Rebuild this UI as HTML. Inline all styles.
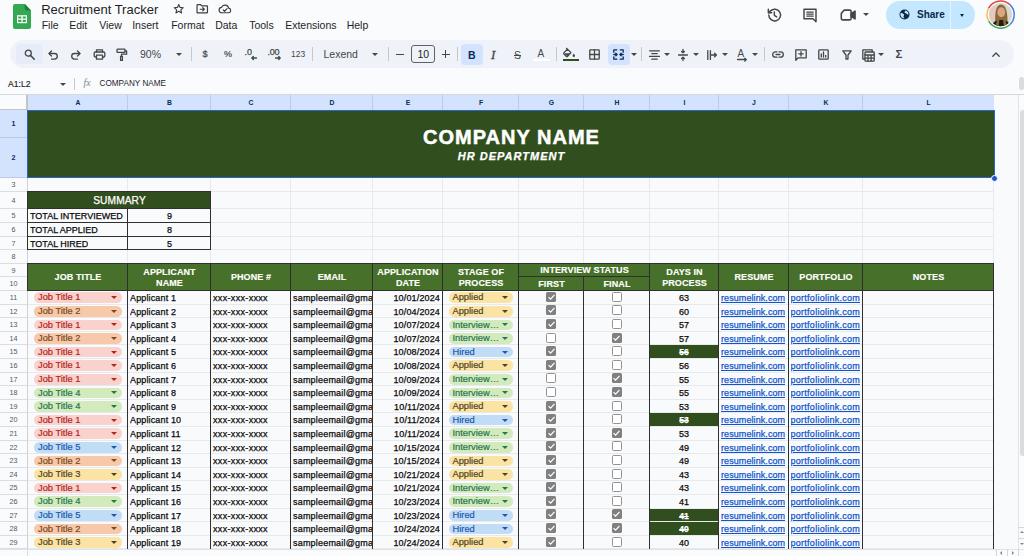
<!DOCTYPE html>
<html lang="en"><head><meta charset="utf-8"><title>Recruitment Tracker</title>
<style>
*{box-sizing:border-box;margin:0;padding:0}
html,body{width:1024px;height:556px;overflow:hidden;background:#f9fbfd;font-family:"Liberation Sans",sans-serif;color:#1f1f1f}
.abs,.abs>*{position:absolute}
#app{position:relative;width:1024px;height:556px;overflow:hidden}
.t{position:absolute;white-space:nowrap;line-height:1}
.menu{font-size:10.5px;top:20px;color:#1f1f1f}
.sep{position:absolute;width:1px;background:#c7c7c7;top:47px;height:14px}
.ico{position:absolute;overflow:visible}
.ch{position:absolute;top:95px;height:15px;background:#d3e3fd;color:#0b2a5b;font-size:6.8px;font-weight:700;text-align:center;line-height:15px}
.rh{position:absolute;left:0;width:27px;color:#55585d;font-size:7.200px;text-align:center;background:#f9fbfd}
.rh.sel{background:#d3e3fd;color:#0b2a5b;font-weight:700}
.hl{position:absolute;height:1px;background:#e8e9eb}
.vl{position:absolute;width:1px;background:#e8e9eb}
.bl{position:absolute;background:#303030}
.c{position:absolute;white-space:nowrap;overflow:hidden;font-size:9px;color:#0a0a0a;line-height:1;-webkit-text-stroke:.25px currentColor}
.hd{position:absolute;color:#fff;font-weight:700;font-size:9px;text-align:center;line-height:10.25px;letter-spacing:.1px;-webkit-text-stroke:.15px #fff}
.chip{position:absolute;height:10.600px;border-radius:5.300px;font-size:9.300px;line-height:10.400px;white-space:nowrap;overflow:hidden;-webkit-text-stroke:.2px currentColor}
.chip b{position:absolute;right:4.300px;top:3.800px;width:0;height:0;border-left:3px solid transparent;border-right:3px solid transparent;border-top:3.400px solid currentColor}
.chip span{position:absolute;left:4px;top:0}
.cb{position:absolute;width:10px;height:10px;border-radius:1.6px}
.cb.off{border:1.200px solid #929292;background:#fff}
.cb.on{background:#808080}
.lnk{color:#1155cc;text-decoration:underline;text-decoration-thickness:.8px;text-underline-offset:1px}
</style></head><body><div id="app">

<svg class="ico" style="left:13.300px;top:4px" width="18" height="25" viewBox="0 0 19 25" preserveAspectRatio="none"><path d="M2 0h10.5L19 6.5V23a2 2 0 0 1-2 2H2a2 2 0 0 1-2-2V2a2 2 0 0 1 2-2z" fill="#34a853"/><path d="M12.5 0L19 6.5h-4.5a2 2 0 0 1-2-2z" fill="#188038"/><path d="M4.2 11.2h10.6v8H4.2z" fill="#fff"/><path d="M5.5 12.5h3.3v2.1H5.5zM10.2 12.5h3.3v2.1h-3.3zM5.5 15.8h3.3v2.1H5.5zM10.2 15.8h3.3v2.1h-3.3z" fill="#34a853"/></svg>
<div class="t" style="left:41.200px;top:3px;font-size:13px;color:#1f1f1f">Recruitment Tracker</div>
<svg class="ico" style="left:173px;top:3px" width="11.500" height="11.500" viewBox="0 0 24 24" fill="none" stroke="#3c4043" stroke-width="2.300" stroke-linejoin="round"><path d="M12 3l2.7 6.2 6.8.6-5.1 4.5 1.5 6.6L12 17.4 6.100 20.9l1.500-6.600L2.500 9.800l6.800-.6z"/></svg>
<svg class="ico" style="left:195.500px;top:3.300px" width="12.500" height="11.500" viewBox="0 0 24 22" fill="none" stroke="#3c4043" stroke-width="2.300" stroke-linejoin="round"><path d="M2 4a1 1 0 0 1 1-1h6l2 2.500h10a1 1 0 0 1 1 1V18a1 1 0 0 1-1 1H3a1 1 0 0 1-1-1z"/><path d="M8 12h8M13 9l3 3-3 3" stroke-linecap="round"/></svg>
<svg class="ico" style="left:217.500px;top:3px" width="14" height="12" viewBox="0 0 26 22" fill="none" stroke="#3c4043" stroke-width="2.200" stroke-linejoin="round" stroke-linecap="round"><path d="M7 18a5 5 0 0 1-.6-9.960A7 7 0 0 1 19.800 9.500 4.300 4.300 0 0 1 20 18z"/><path d="M9.500 12.500l2.700 2.700 4.600-4.800"/></svg>
<div class="t menu" style="left:41.7px">File</div>
<div class="t menu" style="left:69.2px">Edit</div>
<div class="t menu" style="left:99.2px">View</div>
<div class="t menu" style="left:132.2px">Insert</div>
<div class="t menu" style="left:171.2px">Format</div>
<div class="t menu" style="left:215.2px">Data</div>
<div class="t menu" style="left:249.2px">Tools</div>
<div class="t menu" style="left:285.2px">Extensions</div>
<div class="t menu" style="left:346.7px">Help</div>
<svg class="ico" style="left:766px;top:7px" width="16" height="16" viewBox="0 0 24 24" fill="none" stroke="#444746" stroke-width="2.200" stroke-linecap="round" stroke-linejoin="round"><path d="M4.200 12a8.800 8.800 0 1 0 2.600-6.200L4 8.500"/><path d="M3.500 3.500v5h5"/><path d="M12.500 7.500v5l3.500 2.200"/></svg>
<svg class="ico" style="left:802px;top:7px" width="16" height="16" viewBox="0 0 24 24" fill="none" stroke="#444746" stroke-width="2.200" stroke-linejoin="round"><path d="M3 3.500h18v18.500l-4.500-4.500H3z"/><path d="M6.500 7.700h11M6.500 10.700h11M6.500 13.700h11" stroke-width="1.900"/></svg>
<svg class="ico" style="left:840px;top:8px" width="17" height="14" viewBox="0 0 26 20" fill="none" stroke="#444746" stroke-width="2.400" stroke-linejoin="round"><path d="M2 7.500L6.500 2.500H15a2 2 0 0 1 2 2v11a2 2 0 0 1-2 2H4a2 2 0 0 1-2-2z"/><path d="M17 8l6-4v12l-6-4z" fill="#444746"/></svg>
<div class="ico" style="left:863.400px;top:12.700px;border-left:3px solid transparent;border-right:3px solid transparent;border-top:3.300px solid #444746"></div>
<div style="position:absolute;left:885.5px;top:0.5px;width:89.500px;height:28.500px;border-radius:14.500px;background:#c2e7ff"></div>
<div style="position:absolute;left:950px;top:0.5px;width:1px;height:28.500px;background:#e6f4ff"></div>
<svg class="ico" style="left:899px;top:9px" width="11" height="11" viewBox="0 0 24 24"><circle cx="12" cy="12" r="11" fill="#0b2a4a"/><path d="M4 8c3 0 4 2 6 3s1 3 0 4 1 4 2 5c-4 1-9-3-9-8 0-2 .5-3 1-4zM14 3c0 2-2 2-2 4s3 1 4 3 3 1 4 3c2-4-1-9-6-10z" fill="#c2e7ff"/></svg>
<div class="t" style="left:917px;top:9.800px;font-size:10px;font-weight:700;color:#0b2a4a">Share</div>
<div class="ico" style="left:960px;top:13.500px;border-left:2.800px solid transparent;border-right:2.800px solid transparent;border-top:3.200px solid #0b2a4a"></div>
<svg class="ico" style="left:986px;top:0px" width="30" height="30" viewBox="0 0 30 30"><defs><clipPath id="av"><circle cx="14.6" cy="14.6" r="11.600"/></clipPath></defs>
<g fill="none" stroke-width="1.500"><path d="M2.48 8.43A13.6 13.6 0 0 1 23.88 4.65" stroke="#e0443a"/><path d="M23.88 4.65A13.6 13.6 0 0 1 23.70 24.71" stroke="#4a7fe0"/><path d="M23.70 24.71A13.6 13.6 0 0 1 2.71 21.19" stroke="#3fa757"/><path d="M2.71 21.19A13.6 13.6 0 0 1 2.48 8.43" stroke="#f5c04a"/></g>
<g clip-path="url(#av)"><rect width="30" height="30" fill="#d9d8d0"/><rect x="3" y="6" width="8" height="16" fill="#e3c9c0"/><path d="M9.500 26C8.500 14 9.500 4.500 15 4.500S21.800 13 21.500 26z" fill="#8b6a36"/><ellipse cx="15.300" cy="12.300" rx="3.900" ry="5" fill="#d9a585"/><path d="M5 30c0-7 3.500-10 10-10s10 3 10 10z" fill="#1c1c1a"/><path d="M10 27c0-4 1-8 2-9l1.500 1-1 9zM20.500 27c0-4-1-8-2-9l-1.500 1 1 9z" fill="#8b6a36"/></g></svg>
<div style="position:absolute;left:10px;top:40px;width:1004px;height:28px;border-radius:14px;background:#eff3f9"></div>
<div style="position:absolute;left:16px;top:44px;width:26.500px;height:20px;border-radius:4px;background:#e6ecf8"></div>
<div style="position:absolute;left:461px;top:44px;width:21.500px;height:20.500px;border-radius:4px;background:#d3e3fd"></div>
<div style="position:absolute;left:608px;top:44px;width:21.500px;height:20.500px;border-radius:4px;background:#d3e3fd"></div>
<div class="sep" style="left:190.5px"></div>
<div class="sep" style="left:312.0px"></div>
<div class="sep" style="left:388.0px"></div>
<div class="sep" style="left:457.0px"></div>
<div class="sep" style="left:555.5px"></div>
<div class="sep" style="left:641.0px"></div>
<div class="sep" style="left:763.5px"></div>
<svg class="ico" style="left:22.500px;top:48px" width="13" height="13" viewBox="0 0 13 13" fill="none" stroke="#444746" stroke-width="1.300" stroke-linecap="round" stroke-linejoin="round"><circle cx="5.300" cy="5.200" r="3"/><path d="M7.600 7.500l3.600 3.600" stroke-width="1.500"/></svg>
<svg class="ico" style="left:47px;top:49px" width="12" height="12" viewBox="0 0 12 12" fill="none" stroke="#444746" stroke-width="1.300" stroke-linecap="round" stroke-linejoin="round"><path d="M4.500 2L2 4.500 4.500 7"/><path d="M2.300 4.500H7.500a2.800 2.800 0 0 1 0 5.600H4.500"/></svg>
<svg class="ico" style="left:70px;top:49px" width="12" height="12" viewBox="0 0 12 12" fill="none" stroke="#444746" stroke-width="1.300" stroke-linecap="round" stroke-linejoin="round"><path d="M7.500 2L10 4.500 7.500 7"/><path d="M9.700 4.500H4.500a2.800 2.800 0 0 0 0 5.600H7.500"/></svg>
<svg class="ico" style="left:92.500px;top:48px" width="13" height="13" viewBox="0 0 13 13" fill="none" stroke="#444746" stroke-width="1.300" stroke-linecap="round" stroke-linejoin="round"><path d="M3.500 4V1.800h6V4"/><rect x="1.200" y="4" width="10.600" height="5" rx="1.200"/><rect x="3.500" y="7.200" width="6" height="4" fill="#eff3f9"/></svg>
<svg class="ico" style="left:115px;top:48px" width="13" height="14" viewBox="0 0 13 14" fill="none" stroke="#444746" stroke-width="1.300" stroke-linecap="round" stroke-linejoin="round"><rect x="2" y="1.200" width="8" height="3.200" rx=".6"/><path d="M10 2.800h1.600v3.400H6.500v2.200"/><rect x="5.600" y="8.400" width="1.800" height="4" /></svg>
<div class="t" style="left:140px;top:49px;font-size:10.500px;color:#444746">90%</div>
<div class="ico" style="left:175.5px;top:53px;border-left:3px solid transparent;border-right:3px solid transparent;border-top:3.300px solid #444746"></div>
<div class="t" style="left:202.500px;top:49.500px;font-size:9.200px;color:#444746;-webkit-text-stroke:.2px #444746">$</div>
<div class="t" style="left:224px;top:50px;font-size:9px;color:#444746;-webkit-text-stroke:.2px #444746">%</div>
<div class="t" style="left:244.500px;top:48px;font-size:9px;color:#444746;-webkit-text-stroke:.25px #444746">.0</div>
<svg class="ico" style="left:251px;top:56.300px" width="6" height="4" viewBox="0 0 6 4" fill="none" stroke="#444746" stroke-width="1.300" stroke-linecap="round" stroke-linejoin="round" stroke-width="1"><path d="M5.500 2H1M2.300 .5L.8 2l1.500 1.500"/></svg>
<div class="t" style="left:267.500px;top:48px;font-size:9px;color:#444746;-webkit-text-stroke:.25px #444746;letter-spacing:-.3px">.00</div>
<svg class="ico" style="left:275px;top:56.300px" width="6" height="4" viewBox="0 0 6 4" fill="none" stroke="#444746" stroke-width="1.300" stroke-linecap="round" stroke-linejoin="round" stroke-width="1"><path d="M.5 2H5M3.700 .5L5.200 2 3.700 3.500"/></svg>
<div class="t" style="left:291px;top:50px;font-size:8.500px;color:#444746">123</div>
<div class="t" style="left:323.500px;top:48.500px;font-size:10.500px;color:#444746">Lexend</div>
<div class="ico" style="left:371.5px;top:53px;border-left:3px solid transparent;border-right:3px solid transparent;border-top:3.300px solid #444746"></div>
<div style="position:absolute;left:396px;top:53.500px;width:7.500px;height:1.200px;background:#444746"></div>
<div style="position:absolute;left:411px;top:45px;width:24px;height:17.500px;border:1px solid #5f6368;border-radius:3px"></div>
<div class="t" style="left:417.500px;top:48.800px;font-size:10.500px;color:#1f1f1f">10</div>
<div style="position:absolute;left:441.500px;top:53.500px;width:8px;height:1.200px;background:#444746"></div><div style="position:absolute;left:444.900px;top:50.100px;width:1.200px;height:8px;background:#444746"></div>
<div class="t" style="left:468px;top:49.500px;font-size:10.500px;font-weight:700;color:#0b2a5b">B</div>
<div class="t" style="left:491px;top:47.500px;font-size:13px;font-style:italic;font-family:'Liberation Serif',serif;font-weight:400;color:#444746;-webkit-text-stroke:.3px #444746">I</div>
<div class="t" style="left:514px;top:49.500px;font-size:10.500px;color:#444746;text-decoration:line-through">S</div>
<div class="t" style="left:537.500px;top:48.500px;font-size:10px;color:#444746">A</div>
<div style="position:absolute;left:533px;top:58.500px;width:16.500px;height:2px;background:#fff"></div>
<svg class="ico" style="left:563px;top:47px" width="14" height="11" viewBox="0 0 14 11"><path d="M3.200 1l4.800 4.600-3.400 3.600a1 1 0 0 1-1.400 0L1 7a1 1 0 0 1 0-1.400L4.400 2.200" fill="none" stroke="#444746" stroke-width="1.300" stroke-linejoin="round"/><path d="M1.300 6.300h5.900L4.200 9.200z" fill="#444746"/><path d="M10.800 6.500c.7 1 1.200 1.700 1.200 2.300a1.200 1.200 0 0 1-2.400 0c0-.6.500-1.300 1.200-2.300z" fill="#444746"/></svg>
<div style="position:absolute;left:562.500px;top:58.500px;width:16.500px;height:2.200px;background:#314e1e"></div>
<svg class="ico" style="left:589px;top:49px" width="11" height="11" viewBox="0 0 11 11" fill="none" stroke="#444746" stroke-width="1.300" stroke-linecap="round" stroke-linejoin="round" stroke-width="1.200"><rect x=".8" y=".8" width="9.400" height="9.400" rx=".6"/><path d="M5.500 .8v9.400M.8 5.500h9.400"/></svg>
<svg class="ico" style="left:613px;top:49px" width="11" height="11" viewBox="0 0 11 11" fill="none" stroke="#0b2a5b" stroke-width="1.300" stroke-linecap="round" stroke-linejoin="round"><path d="M.8 3.200V.8h3M7.200 .8h3v2.400M.8 7.800v2.400h3M7.200 10.200h3V7.800"/><path d="M.8 5.500h3M2.800 4.200l1.300 1.300-1.300 1.300M10.200 5.500h-3M8.200 4.200L6.900 5.500l1.300 1.300"/></svg>
<div class="ico" style="left:631px;top:53px;border-left:3px solid transparent;border-right:3px solid transparent;border-top:3.300px solid #444746"></div>
<svg class="ico" style="left:648.500px;top:49.500px" width="11" height="10" viewBox="0 0 11 10" fill="none" stroke="#444746" stroke-width="1.300" stroke-linecap="round" stroke-linejoin="round" stroke-width="1.200"><path d="M.6 .8h9.800M2.800 3.600h5.400M.6 6.400h9.800M2.800 9.200h5.400"/></svg>
<div class="ico" style="left:664px;top:53px;border-left:3px solid transparent;border-right:3px solid transparent;border-top:3.300px solid #444746"></div>
<svg class="ico" style="left:678px;top:48.500px" width="10" height="12" viewBox="0 0 10 12" fill="none" stroke="#444746" stroke-width="1.300" stroke-linecap="round" stroke-linejoin="round" stroke-width="1.200"><path d="M.6 6h8.800M5 .5v3.300M3.600 2.500L5 3.900l1.400-1.400M5 11.500V8.200M3.600 9.500L5 8.100l1.400 1.400"/></svg>
<div class="ico" style="left:693px;top:53px;border-left:3px solid transparent;border-right:3px solid transparent;border-top:3.300px solid #444746"></div>
<svg class="ico" style="left:707px;top:49.500px" width="11" height="10" viewBox="0 0 11 10" fill="none" stroke="#444746" stroke-width="1.300" stroke-linecap="round" stroke-linejoin="round" stroke-width="1.200"><path d="M.8 .6v8.800M3.400 .6v8.800M3.400 5h5.800M7.600 3.200L9.400 5 7.600 6.800"/></svg>
<div class="ico" style="left:722px;top:53px;border-left:3px solid transparent;border-right:3px solid transparent;border-top:3.300px solid #444746"></div>
<div class="t" style="left:737.500px;top:48.500px;font-size:10px;color:#444746">A</div>
<svg class="ico" style="left:737px;top:57.500px" width="11" height="4" viewBox="0 0 11 4" fill="none" stroke="#444746" stroke-width="1.300" stroke-linecap="round" stroke-linejoin="round" stroke-width="1"><path d="M.5 1.500h8.500M7.800 .3l1.500 1.200-1.500 1.500"/></svg>
<div class="ico" style="left:751.5px;top:53px;border-left:3px solid transparent;border-right:3px solid transparent;border-top:3.300px solid #444746"></div>
<svg class="ico" style="left:771.500px;top:51px" width="12" height="7" viewBox="0 0 12 7" fill="none" stroke="#444746" stroke-width="1.300" stroke-linecap="round" stroke-linejoin="round" stroke-width="1.300"><path d="M5 .8H3.400a2.700 2.700 0 0 0 0 5.400H5M7 .8h1.600a2.700 2.700 0 0 1 0 5.400H7M4 3.500h4"/></svg>
<svg class="ico" style="left:794.500px;top:48.500px" width="12" height="12" viewBox="0 0 12 12" fill="none" stroke="#444746" stroke-width="1.300" stroke-linecap="round" stroke-linejoin="round" stroke-width="1.200"><path d="M.8 .8h10.400v8H3.200L.8 11.200z"/><path d="M6 2.600v4.400M3.800 4.800h4.400"/></svg>
<svg class="ico" style="left:818px;top:49px" width="11" height="11" viewBox="0 0 11 11" fill="none" stroke="#444746" stroke-width="1.300" stroke-linecap="round" stroke-linejoin="round" stroke-width="1.200"><rect x=".8" y=".8" width="9.400" height="9.400" rx=".8"/><path d="M3.300 8V5M5.500 8V3M7.700 8V6.500"/></svg>
<svg class="ico" style="left:841.500px;top:49.500px" width="10" height="10" viewBox="0 0 10 10" fill="none" stroke="#444746" stroke-width="1.300" stroke-linecap="round" stroke-linejoin="round" stroke-width="1.300"><path d="M.8 .8h8.400L6 5v4H4V5z"/></svg>
<svg class="ico" style="left:862px;top:48.500px" width="13" height="13" viewBox="0 0 13 13" fill="none" stroke="#444746" stroke-width="1.300" stroke-linecap="round" stroke-linejoin="round" stroke-width="1.200"><path d="M2.600 10H.8V.8h9.400v1.800"/><rect x="3" y="3" width="9.200" height="9.200" rx=".8"/><path d="M3 6h9.200M6 6v6.200M9.100 6v6.200M3 9.100h9.200"/></svg>
<div class="ico" style="left:878px;top:53px;border-left:3px solid transparent;border-right:3px solid transparent;border-top:3.300px solid #444746"></div>
<div class="t" style="left:895.500px;top:48.500px;font-size:11.500px;font-weight:700;color:#444746">&Sigma;</div>
<svg class="ico" style="left:991.500px;top:52px" width="8" height="5" viewBox="0 0 8 5" fill="none" stroke="#444746" stroke-width="1.300" stroke-linecap="round" stroke-linejoin="round" stroke-width="1.300"><path d="M.8 4.200L4 1l3.200 3.200"/></svg>
<div class="t" style="left:8px;top:79.500px;font-size:8.600px;color:#1f1f1f;-webkit-text-stroke:.15px #1f1f1f">A1:L2</div>
<div class="ico" style="left:59.5px;top:82.5px;border-left:3px solid transparent;border-right:3px solid transparent;border-top:3.300px solid #444746"></div>
<div style="position:absolute;left:74px;top:78px;width:1px;height:12px;background:#c7c7c7"></div>
<div class="t" style="left:83.500px;top:78px;font-size:10px;font-style:italic;font-family:'Liberation Serif',serif;color:#80868b">fx</div>
<div class="t" style="left:99.500px;top:79.500px;font-size:8.200px;color:#1f1f1f">COMPANY NAME</div>
<div style="position:absolute;left:1018.500px;top:77px;width:5px;height:13px;border-radius:2.500px;background:#dadce0"></div>
<div style="position:absolute;left:0;top:94px;width:1024px;height:1px;background:#d5d7da"></div>
<div style="position:absolute;left:0;top:95px;width:1018px;height:454px;background:#f9fafc"></div>
<div style="position:absolute;left:0;top:95px;width:27.500px;height:15.500px;background:#f9fbfd;border-right:2.500px solid #c2c3c5;border-bottom:2.500px solid #c2c3c5"></div>
<div class="ch" style="left:28px;width:100px">A</div>
<div class="ch" style="left:128px;width:83px">B</div>
<div style="position:absolute;left:127px;top:95px;width:1px;height:15px;background:#bccbe6"></div>
<div class="ch" style="left:211px;width:80px">C</div>
<div style="position:absolute;left:210px;top:95px;width:1px;height:15px;background:#bccbe6"></div>
<div class="ch" style="left:291px;width:82px">D</div>
<div style="position:absolute;left:290px;top:95px;width:1px;height:15px;background:#bccbe6"></div>
<div class="ch" style="left:373px;width:70px">E</div>
<div style="position:absolute;left:372px;top:95px;width:1px;height:15px;background:#bccbe6"></div>
<div class="ch" style="left:443px;width:76px">F</div>
<div style="position:absolute;left:442px;top:95px;width:1px;height:15px;background:#bccbe6"></div>
<div class="ch" style="left:519px;width:65px">G</div>
<div style="position:absolute;left:518px;top:95px;width:1px;height:15px;background:#bccbe6"></div>
<div class="ch" style="left:584px;width:66px">H</div>
<div style="position:absolute;left:583px;top:95px;width:1px;height:15px;background:#bccbe6"></div>
<div class="ch" style="left:650px;width:69px">I</div>
<div style="position:absolute;left:649px;top:95px;width:1px;height:15px;background:#bccbe6"></div>
<div class="ch" style="left:719px;width:70px">J</div>
<div style="position:absolute;left:718px;top:95px;width:1px;height:15px;background:#bccbe6"></div>
<div class="ch" style="left:789px;width:74px">K</div>
<div style="position:absolute;left:788px;top:95px;width:1px;height:15px;background:#bccbe6"></div>
<div class="ch" style="left:863px;width:131px">L</div>
<div style="position:absolute;left:862px;top:95px;width:1px;height:15px;background:#bccbe6"></div>
<div class="rh sel" style="top:110px;height:28px;line-height:28px">1</div>
<div class="hl" style="left:0;top:137px;width:27px;background:#bccbe6"></div>
<div class="rh sel" style="top:138px;height:40px;line-height:40px">2</div>
<div class="hl" style="left:0;top:177px;width:27px;background:#bccbe6"></div>
<div class="rh" style="top:178px;height:14px;line-height:14px">3</div>
<div class="hl" style="left:0;top:191px;width:27px;background:#dcdde0"></div>
<div class="rh" style="top:192px;height:17px;line-height:17px">4</div>
<div class="hl" style="left:0;top:208px;width:27px;background:#dcdde0"></div>
<div class="rh" style="top:209px;height:14px;line-height:14px">5</div>
<div class="hl" style="left:0;top:222px;width:27px;background:#dcdde0"></div>
<div class="rh" style="top:223px;height:14px;line-height:14px">6</div>
<div class="hl" style="left:0;top:236px;width:27px;background:#dcdde0"></div>
<div class="rh" style="top:237px;height:13px;line-height:13px">7</div>
<div class="hl" style="left:0;top:249px;width:27px;background:#dcdde0"></div>
<div class="rh" style="top:250px;height:14px;line-height:14px">8</div>
<div class="hl" style="left:0;top:263px;width:27px;background:#dcdde0"></div>
<div class="rh" style="top:264px;height:13px;line-height:13px">9</div>
<div class="hl" style="left:0;top:276px;width:27px;background:#dcdde0"></div>
<div class="rh" style="top:277px;height:14px;line-height:14px">10</div>
<div class="hl" style="left:0;top:290px;width:27px;background:#dcdde0"></div>
<div class="rh" style="top:291px;height:14px;line-height:14px">11</div>
<div class="hl" style="left:0;top:304px;width:27px;background:#dcdde0"></div>
<div class="rh" style="top:305px;height:13px;line-height:13px">12</div>
<div class="hl" style="left:0;top:317px;width:27px;background:#dcdde0"></div>
<div class="rh" style="top:318px;height:14px;line-height:14px">13</div>
<div class="hl" style="left:0;top:331px;width:27px;background:#dcdde0"></div>
<div class="rh" style="top:332px;height:13px;line-height:13px">14</div>
<div class="hl" style="left:0;top:344px;width:27px;background:#dcdde0"></div>
<div class="rh" style="top:345px;height:14px;line-height:14px">15</div>
<div class="hl" style="left:0;top:358px;width:27px;background:#dcdde0"></div>
<div class="rh" style="top:359px;height:14px;line-height:14px">16</div>
<div class="hl" style="left:0;top:372px;width:27px;background:#dcdde0"></div>
<div class="rh" style="top:373px;height:13px;line-height:13px">17</div>
<div class="hl" style="left:0;top:385px;width:27px;background:#dcdde0"></div>
<div class="rh" style="top:386px;height:14px;line-height:14px">18</div>
<div class="hl" style="left:0;top:399px;width:27px;background:#dcdde0"></div>
<div class="rh" style="top:400px;height:13px;line-height:13px">19</div>
<div class="hl" style="left:0;top:412px;width:27px;background:#dcdde0"></div>
<div class="rh" style="top:413px;height:14px;line-height:14px">20</div>
<div class="hl" style="left:0;top:426px;width:27px;background:#dcdde0"></div>
<div class="rh" style="top:427px;height:14px;line-height:14px">21</div>
<div class="hl" style="left:0;top:440px;width:27px;background:#dcdde0"></div>
<div class="rh" style="top:441px;height:13px;line-height:13px">22</div>
<div class="hl" style="left:0;top:453px;width:27px;background:#dcdde0"></div>
<div class="rh" style="top:454px;height:14px;line-height:14px">23</div>
<div class="hl" style="left:0;top:467px;width:27px;background:#dcdde0"></div>
<div class="rh" style="top:468px;height:13px;line-height:13px">24</div>
<div class="hl" style="left:0;top:480px;width:27px;background:#dcdde0"></div>
<div class="rh" style="top:481px;height:14px;line-height:14px">25</div>
<div class="hl" style="left:0;top:494px;width:27px;background:#dcdde0"></div>
<div class="rh" style="top:495px;height:14px;line-height:14px">26</div>
<div class="hl" style="left:0;top:508px;width:27px;background:#dcdde0"></div>
<div class="rh" style="top:509px;height:13px;line-height:13px">27</div>
<div class="hl" style="left:0;top:521px;width:27px;background:#dcdde0"></div>
<div class="rh" style="top:522px;height:14px;line-height:14px">28</div>
<div class="hl" style="left:0;top:535px;width:27px;background:#dcdde0"></div>
<div class="rh" style="top:536px;height:13px;line-height:13px">29</div>
<div class="hl" style="left:0;top:548px;width:27px;background:#dcdde0"></div>
<div class="rh" style="top:549px;height:0px;line-height:0px"></div>
<div class="hl" style="left:0;top:548px;width:27px;background:#dcdde0"></div>
<div class="vl" style="left:27px;top:110px;height:439px;background:#d0d1d4"></div>
<div class="hl" style="left:28px;top:191px;width:966px"></div>
<div class="hl" style="left:28px;top:208px;width:966px"></div>
<div class="hl" style="left:28px;top:222px;width:966px"></div>
<div class="hl" style="left:28px;top:236px;width:966px"></div>
<div class="hl" style="left:28px;top:249px;width:966px"></div>
<div class="hl" style="left:28px;top:263px;width:966px"></div>
<div class="hl" style="left:28px;top:276px;width:966px"></div>
<div class="hl" style="left:28px;top:290px;width:966px"></div>
<div class="hl" style="left:28px;top:304px;width:966px"></div>
<div class="hl" style="left:28px;top:317px;width:966px"></div>
<div class="hl" style="left:28px;top:331px;width:966px"></div>
<div class="hl" style="left:28px;top:344px;width:966px"></div>
<div class="hl" style="left:28px;top:358px;width:966px"></div>
<div class="hl" style="left:28px;top:372px;width:966px"></div>
<div class="hl" style="left:28px;top:385px;width:966px"></div>
<div class="hl" style="left:28px;top:399px;width:966px"></div>
<div class="hl" style="left:28px;top:412px;width:966px"></div>
<div class="hl" style="left:28px;top:426px;width:966px"></div>
<div class="hl" style="left:28px;top:440px;width:966px"></div>
<div class="hl" style="left:28px;top:453px;width:966px"></div>
<div class="hl" style="left:28px;top:467px;width:966px"></div>
<div class="hl" style="left:28px;top:480px;width:966px"></div>
<div class="hl" style="left:28px;top:494px;width:966px"></div>
<div class="hl" style="left:28px;top:508px;width:966px"></div>
<div class="hl" style="left:28px;top:521px;width:966px"></div>
<div class="hl" style="left:28px;top:535px;width:966px"></div>
<div class="hl" style="left:28px;top:548px;width:966px"></div>
<div class="vl" style="left:127px;top:177px;height:372px"></div>
<div class="vl" style="left:210px;top:177px;height:372px"></div>
<div class="vl" style="left:290px;top:177px;height:372px"></div>
<div class="vl" style="left:372px;top:177px;height:372px"></div>
<div class="vl" style="left:442px;top:177px;height:372px"></div>
<div class="vl" style="left:518px;top:177px;height:372px"></div>
<div class="vl" style="left:583px;top:177px;height:372px"></div>
<div class="vl" style="left:649px;top:177px;height:372px"></div>
<div class="vl" style="left:718px;top:177px;height:372px"></div>
<div class="vl" style="left:788px;top:177px;height:372px"></div>
<div class="vl" style="left:862px;top:177px;height:372px"></div>
<div class="vl" style="left:993px;top:177px;height:372px"></div>
<div style="position:absolute;left:994px;top:95px;width:24px;height:454px;background:#f9fafc"></div>
<div style="position:absolute;left:1018px;top:95px;width:1px;height:454px;background:#e1e3e6"></div>
<div style="position:absolute;left:1019.500px;top:110px;width:6px;height:346px;border-radius:3px;background:#dadce0"></div>
<div style="position:absolute;left:0;top:549px;width:1024px;height:7px;background:#f9fbfd;border-top:1px solid #e1e3e6"></div>
<div style="position:absolute;left:1018px;top:527px;width:6px;height:1px;background:#d5d7da"></div><div style="position:absolute;left:1018px;top:538px;width:6px;height:1px;background:#d5d7da"></div>
<div style="position:absolute;left:996px;top:549px;width:1px;height:7px;background:#d5d7da"></div><div style="position:absolute;left:1007px;top:549px;width:1px;height:7px;background:#d5d7da"></div><div style="position:absolute;left:1018px;top:549px;width:1px;height:7px;background:#d5d7da"></div>
<div class="ico" style="left:1000px;top:551px;border-top:2px solid transparent;border-bottom:2px solid transparent;border-right:2.500px solid #80868b"></div>
<div class="ico" style="left:1011.500px;top:551px;border-top:2px solid transparent;border-bottom:2px solid transparent;border-left:2.500px solid #80868b"></div>
<div class="ico" style="left:1020px;top:531px;border-left:2px solid transparent;border-right:2px solid transparent;border-bottom:2.500px solid #80868b"></div>
<div class="ico" style="left:1020px;top:543px;border-left:2px solid transparent;border-right:2px solid transparent;border-top:2.500px solid #80868b"></div>
<div style="position:absolute;left:27px;top:549px;width:1px;height:7px;background:#dcdde0"></div>
<div style="position:absolute;left:28px;top:110px;width:966px;height:67px;background:#314e1e"></div>
<div class="t" style="left:28px;width:966px;text-align:center;top:126.500px;font-size:20px;font-weight:700;color:#fff;letter-spacing:1px;text-indent:1px;-webkit-text-stroke:.5px #fff">COMPANY NAME</div>
<div class="t" style="left:28px;width:966px;text-align:center;top:150.500px;font-size:11px;font-weight:700;font-style:italic;color:#fff;letter-spacing:1px;text-indent:1px;-webkit-text-stroke:.25px #fff">HR DEPARTMENT</div>
<div style="position:absolute;left:27px;top:109.500px;width:967.500px;height:68.500px;border:1px solid #2b66c4"></div>
<div style="position:absolute;left:990.800px;top:174.500px;width:7.400px;height:7.400px;border-radius:50%;background:#1f55cc;border:.5px solid #fff"></div>
<div style="position:absolute;left:28px;top:192px;width:183px;height:17px;background:#314e1e"></div>
<div class="t" style="left:28px;width:183px;text-align:center;top:196px;font-size:10.200px;color:#fff;letter-spacing:.1px;-webkit-text-stroke:.25px #fff">SUMMARY</div>
<div class="c" style="left:30px;top:211.6px;font-size:9px">TOTAL INTERVIEWED</div>
<div class="c" style="left:128px;width:83px;text-align:center;top:211.6px;font-size:9px">9</div>
<div class="c" style="left:30px;top:225.6px;font-size:9px">TOTAL APPLIED</div>
<div class="c" style="left:128px;width:83px;text-align:center;top:225.6px;font-size:9px">8</div>
<div class="c" style="left:30px;top:239.6px;font-size:9px">TOTAL HIRED</div>
<div class="c" style="left:128px;width:83px;text-align:center;top:239.6px;font-size:9px">5</div>
<div class="bl" style="left:27px;top:191px;width:184px;height:1px"></div>
<div class="bl" style="left:27px;top:208px;width:184px;height:1px"></div>
<div class="bl" style="left:27px;top:222px;width:184px;height:1px"></div>
<div class="bl" style="left:27px;top:236px;width:184px;height:1px"></div>
<div class="bl" style="left:27px;top:249px;width:184px;height:1px"></div>
<div class="bl" style="left:27px;top:191px;width:1px;height:59px"></div>
<div class="bl" style="left:210px;top:191px;width:1px;height:59px"></div>
<div class="bl" style="left:127px;top:209px;width:1px;height:41px"></div>
<div style="position:absolute;left:28px;top:264px;width:966px;height:27px;background:#47702b"></div>
<div class="hd" style="left:28px;width:100px;top:272.38px">JOB TITLE</div>
<div class="hd" style="left:128px;width:83px;top:267.25px">APPLICANT<br>NAME</div>
<div class="hd" style="left:211px;width:80px;top:272.38px">PHONE #</div>
<div class="hd" style="left:291px;width:82px;top:272.38px">EMAIL</div>
<div class="hd" style="left:373px;width:70px;top:267.25px">APPLICATION<br>DATE</div>
<div class="hd" style="left:443px;width:76px;top:267.25px">STAGE OF<br>PROCESS</div>
<div class="hd" style="left:519px;width:131px;top:264.88px">INTERVIEW STATUS</div>
<div class="hd" style="left:519px;width:65px;top:278.88px">FIRST</div>
<div class="hd" style="left:584px;width:66px;top:278.88px">FINAL</div>
<div class="hd" style="left:650px;width:69px;top:267.25px">DAYS IN<br>PROCESS</div>
<div class="hd" style="left:719px;width:70px;top:272.38px">RESUME</div>
<div class="hd" style="left:789px;width:74px;top:272.38px">PORTFOLIO</div>
<div class="hd" style="left:863px;width:131px;top:272.38px">NOTES</div>
<div class="bl" style="left:27px;top:263px;width:967px;height:1px"></div>
<div class="bl" style="left:27px;top:290px;width:967px;height:1px"></div>
<div class="bl" style="left:518px;top:276px;width:131px;height:1px"></div>
<div class="bl" style="left:27px;top:263px;width:1px;height:28px"></div>
<div class="bl" style="left:127px;top:263px;width:1px;height:286px"></div>
<div class="bl" style="left:210px;top:263px;width:1px;height:286px"></div>
<div class="bl" style="left:290px;top:263px;width:1px;height:286px"></div>
<div class="bl" style="left:372px;top:263px;width:1px;height:286px"></div>
<div class="bl" style="left:442px;top:263px;width:1px;height:286px"></div>
<div class="bl" style="left:518px;top:263px;width:1px;height:286px"></div>
<div class="bl" style="left:583px;top:276px;width:1px;height:273px"></div>
<div class="bl" style="left:649px;top:263px;width:1px;height:286px"></div>
<div class="bl" style="left:718px;top:263px;width:1px;height:286px"></div>
<div class="bl" style="left:788px;top:263px;width:1px;height:286px"></div>
<div class="bl" style="left:862px;top:263px;width:1px;height:286px"></div>
<div class="bl" style="left:993px;top:263px;width:1px;height:286px"></div>
<div class="chip" style="left:34px;width:87.500px;top:292.4px;background:#f9d2ce;color:#b3241c"><span>Job Title 1</span><b></b></div>
<div class="c" style="left:130px;top:294.0px;letter-spacing:.14px">Applicant 1</div>
<div class="c" style="left:213px;top:294.0px;letter-spacing:.33px">xxx-xxx-xxxx</div>
<div class="c" style="left:293px;width:79px;top:294.0px;letter-spacing:.2px;height:11px">sampleemail@gmail.com</div>
<div class="c" style="left:373px;width:67px;text-align:right;top:294.0px;letter-spacing:.15px">10/01/2024</div>
<div class="chip" style="left:448.500px;width:64px;top:292.4px;background:#fbe3a3;color:#4f4326"><span>Applied</span><b></b></div>
<div class="cb on" style="left:546.3px;top:291.7px"><svg class="ico" style="left:1.500px;top:2px" width="7" height="6" viewBox="0 0 7 6" fill="none" stroke="#fff" stroke-width="1.300"><path d="M.6 3.100l2 2L6.500 .9"/></svg></div>
<div class="cb off" style="left:611.8px;top:291.7px"></div>
<div class="c" style="left:650px;width:68px;text-align:center;top:294.0px">63</div>
<div class="c lnk" style="left:721px;top:294.0px;letter-spacing:.08px;height:12px">resumelink.com</div>
<div class="c lnk" style="left:790.500px;top:294.0px;letter-spacing:.27px;height:12px">portfoliolink.com</div>
<div class="chip" style="left:34px;width:87.500px;top:306.0px;background:#f7c8aa;color:#7a4a1e"><span>Job Title 2</span><b></b></div>
<div class="c" style="left:130px;top:307.6px;letter-spacing:.14px">Applicant 2</div>
<div class="c" style="left:213px;top:307.6px;letter-spacing:.33px">xxx-xxx-xxxx</div>
<div class="c" style="left:293px;width:79px;top:307.6px;letter-spacing:.2px;height:11px">sampleemail@gmail.com</div>
<div class="c" style="left:373px;width:67px;text-align:right;top:307.6px;letter-spacing:.15px">10/04/2024</div>
<div class="chip" style="left:448.500px;width:64px;top:306.0px;background:#fbe3a3;color:#4f4326"><span>Applied</span><b></b></div>
<div class="cb on" style="left:546.3px;top:305.3px"><svg class="ico" style="left:1.500px;top:2px" width="7" height="6" viewBox="0 0 7 6" fill="none" stroke="#fff" stroke-width="1.300"><path d="M.6 3.100l2 2L6.500 .9"/></svg></div>
<div class="cb off" style="left:611.8px;top:305.3px"></div>
<div class="c" style="left:650px;width:68px;text-align:center;top:307.6px">60</div>
<div class="c lnk" style="left:721px;top:307.6px;letter-spacing:.08px;height:12px">resumelink.com</div>
<div class="c lnk" style="left:790.500px;top:307.6px;letter-spacing:.27px;height:12px">portfoliolink.com</div>
<div class="chip" style="left:34px;width:87.500px;top:319.6px;background:#f9d2ce;color:#b3241c"><span>Job Title 1</span><b></b></div>
<div class="c" style="left:130px;top:321.2px;letter-spacing:.14px">Applicant 3</div>
<div class="c" style="left:213px;top:321.2px;letter-spacing:.33px">xxx-xxx-xxxx</div>
<div class="c" style="left:293px;width:79px;top:321.2px;letter-spacing:.2px;height:11px">sampleemail@gmail.com</div>
<div class="c" style="left:373px;width:67px;text-align:right;top:321.2px;letter-spacing:.15px">10/07/2024</div>
<div class="chip" style="left:448.500px;width:64px;top:319.6px;background:#d3eabd;color:#25754f"><span>Interview…</span><b></b></div>
<div class="cb on" style="left:546.3px;top:318.9px"><svg class="ico" style="left:1.500px;top:2px" width="7" height="6" viewBox="0 0 7 6" fill="none" stroke="#fff" stroke-width="1.300"><path d="M.6 3.100l2 2L6.500 .9"/></svg></div>
<div class="cb off" style="left:611.8px;top:318.9px"></div>
<div class="c" style="left:650px;width:68px;text-align:center;top:321.2px">57</div>
<div class="c lnk" style="left:721px;top:321.2px;letter-spacing:.08px;height:12px">resumelink.com</div>
<div class="c lnk" style="left:790.500px;top:321.2px;letter-spacing:.27px;height:12px">portfoliolink.com</div>
<div class="chip" style="left:34px;width:87.500px;top:333.2px;background:#f7c8aa;color:#7a4a1e"><span>Job Title 2</span><b></b></div>
<div class="c" style="left:130px;top:334.8px;letter-spacing:.14px">Applicant 4</div>
<div class="c" style="left:213px;top:334.8px;letter-spacing:.33px">xxx-xxx-xxxx</div>
<div class="c" style="left:293px;width:79px;top:334.8px;letter-spacing:.2px;height:11px">sampleemail@gmail.com</div>
<div class="c" style="left:373px;width:67px;text-align:right;top:334.8px;letter-spacing:.15px">10/07/2024</div>
<div class="chip" style="left:448.500px;width:64px;top:333.2px;background:#d3eabd;color:#25754f"><span>Interview…</span><b></b></div>
<div class="cb off" style="left:546.3px;top:332.5px"></div>
<div class="cb on" style="left:611.8px;top:332.5px"><svg class="ico" style="left:1.500px;top:2px" width="7" height="6" viewBox="0 0 7 6" fill="none" stroke="#fff" stroke-width="1.300"><path d="M.6 3.100l2 2L6.500 .9"/></svg></div>
<div class="c" style="left:650px;width:68px;text-align:center;top:334.8px">57</div>
<div class="c lnk" style="left:721px;top:334.8px;letter-spacing:.08px;height:12px">resumelink.com</div>
<div class="c lnk" style="left:790.500px;top:334.8px;letter-spacing:.27px;height:12px">portfoliolink.com</div>
<div class="chip" style="left:34px;width:87.500px;top:346.8px;background:#f9d2ce;color:#b3241c"><span>Job Title 1</span><b></b></div>
<div class="c" style="left:130px;top:348.4px;letter-spacing:.14px">Applicant 5</div>
<div class="c" style="left:213px;top:348.4px;letter-spacing:.33px">xxx-xxx-xxxx</div>
<div class="c" style="left:293px;width:79px;top:348.4px;letter-spacing:.2px;height:11px">sampleemail@gmail.com</div>
<div class="c" style="left:373px;width:67px;text-align:right;top:348.4px;letter-spacing:.15px">10/08/2024</div>
<div class="chip" style="left:448.500px;width:64px;top:346.8px;background:#c0ddf5;color:#1d57b0"><span>Hired</span><b></b></div>
<div class="cb on" style="left:546.3px;top:346.1px"><svg class="ico" style="left:1.500px;top:2px" width="7" height="6" viewBox="0 0 7 6" fill="none" stroke="#fff" stroke-width="1.300"><path d="M.6 3.100l2 2L6.500 .9"/></svg></div>
<div class="cb off" style="left:611.8px;top:346.1px"></div>
<div style="position:absolute;left:650px;top:345px;width:68px;height:13px;background:#314e1e"></div>
<div class="c" style="left:650px;width:68px;text-align:center;top:348.4px;color:#fff;text-decoration:line-through;font-weight:700;font-size:8.500px">56</div>
<div class="c lnk" style="left:721px;top:348.4px;letter-spacing:.08px;height:12px">resumelink.com</div>
<div class="c lnk" style="left:790.500px;top:348.4px;letter-spacing:.27px;height:12px">portfoliolink.com</div>
<div class="chip" style="left:34px;width:87.500px;top:360.4px;background:#f9d2ce;color:#b3241c"><span>Job Title 1</span><b></b></div>
<div class="c" style="left:130px;top:362.0px;letter-spacing:.14px">Applicant 6</div>
<div class="c" style="left:213px;top:362.0px;letter-spacing:.33px">xxx-xxx-xxxx</div>
<div class="c" style="left:293px;width:79px;top:362.0px;letter-spacing:.2px;height:11px">sampleemail@gmail.com</div>
<div class="c" style="left:373px;width:67px;text-align:right;top:362.0px;letter-spacing:.15px">10/08/2024</div>
<div class="chip" style="left:448.500px;width:64px;top:360.4px;background:#fbe3a3;color:#4f4326"><span>Applied</span><b></b></div>
<div class="cb on" style="left:546.3px;top:359.7px"><svg class="ico" style="left:1.500px;top:2px" width="7" height="6" viewBox="0 0 7 6" fill="none" stroke="#fff" stroke-width="1.300"><path d="M.6 3.100l2 2L6.500 .9"/></svg></div>
<div class="cb off" style="left:611.8px;top:359.7px"></div>
<div class="c" style="left:650px;width:68px;text-align:center;top:362.0px">56</div>
<div class="c lnk" style="left:721px;top:362.0px;letter-spacing:.08px;height:12px">resumelink.com</div>
<div class="c lnk" style="left:790.500px;top:362.0px;letter-spacing:.27px;height:12px">portfoliolink.com</div>
<div class="chip" style="left:34px;width:87.500px;top:374.0px;background:#f9d2ce;color:#b3241c"><span>Job Title 1</span><b></b></div>
<div class="c" style="left:130px;top:375.6px;letter-spacing:.14px">Applicant 7</div>
<div class="c" style="left:213px;top:375.6px;letter-spacing:.33px">xxx-xxx-xxxx</div>
<div class="c" style="left:293px;width:79px;top:375.6px;letter-spacing:.2px;height:11px">sampleemail@gmail.com</div>
<div class="c" style="left:373px;width:67px;text-align:right;top:375.6px;letter-spacing:.15px">10/09/2024</div>
<div class="chip" style="left:448.500px;width:64px;top:374.0px;background:#d3eabd;color:#25754f"><span>Interview…</span><b></b></div>
<div class="cb off" style="left:546.3px;top:373.3px"></div>
<div class="cb on" style="left:611.8px;top:373.3px"><svg class="ico" style="left:1.500px;top:2px" width="7" height="6" viewBox="0 0 7 6" fill="none" stroke="#fff" stroke-width="1.300"><path d="M.6 3.100l2 2L6.500 .9"/></svg></div>
<div class="c" style="left:650px;width:68px;text-align:center;top:375.6px">55</div>
<div class="c lnk" style="left:721px;top:375.6px;letter-spacing:.08px;height:12px">resumelink.com</div>
<div class="c lnk" style="left:790.500px;top:375.6px;letter-spacing:.27px;height:12px">portfoliolink.com</div>
<div class="chip" style="left:34px;width:87.500px;top:387.6px;background:#d3eabd;color:#25754f"><span>Job Title 4</span><b></b></div>
<div class="c" style="left:130px;top:389.2px;letter-spacing:.14px">Applicant 8</div>
<div class="c" style="left:213px;top:389.2px;letter-spacing:.33px">xxx-xxx-xxxx</div>
<div class="c" style="left:293px;width:79px;top:389.2px;letter-spacing:.2px;height:11px">sampleemail@gmail.com</div>
<div class="c" style="left:373px;width:67px;text-align:right;top:389.2px;letter-spacing:.15px">10/09/2024</div>
<div class="chip" style="left:448.500px;width:64px;top:387.6px;background:#d3eabd;color:#25754f"><span>Interview…</span><b></b></div>
<div class="cb off" style="left:546.3px;top:386.9px"></div>
<div class="cb on" style="left:611.8px;top:386.9px"><svg class="ico" style="left:1.500px;top:2px" width="7" height="6" viewBox="0 0 7 6" fill="none" stroke="#fff" stroke-width="1.300"><path d="M.6 3.100l2 2L6.500 .9"/></svg></div>
<div class="c" style="left:650px;width:68px;text-align:center;top:389.2px">55</div>
<div class="c lnk" style="left:721px;top:389.2px;letter-spacing:.08px;height:12px">resumelink.com</div>
<div class="c lnk" style="left:790.500px;top:389.2px;letter-spacing:.27px;height:12px">portfoliolink.com</div>
<div class="chip" style="left:34px;width:87.500px;top:401.2px;background:#d3eabd;color:#25754f"><span>Job Title 4</span><b></b></div>
<div class="c" style="left:130px;top:402.8px;letter-spacing:.14px">Applicant 9</div>
<div class="c" style="left:213px;top:402.8px;letter-spacing:.33px">xxx-xxx-xxxx</div>
<div class="c" style="left:293px;width:79px;top:402.8px;letter-spacing:.2px;height:11px">sampleemail@gmail.com</div>
<div class="c" style="left:373px;width:67px;text-align:right;top:402.8px;letter-spacing:.15px">10/11/2024</div>
<div class="chip" style="left:448.500px;width:64px;top:401.2px;background:#fbe3a3;color:#4f4326"><span>Applied</span><b></b></div>
<div class="cb on" style="left:546.3px;top:400.5px"><svg class="ico" style="left:1.500px;top:2px" width="7" height="6" viewBox="0 0 7 6" fill="none" stroke="#fff" stroke-width="1.300"><path d="M.6 3.100l2 2L6.500 .9"/></svg></div>
<div class="cb off" style="left:611.8px;top:400.5px"></div>
<div class="c" style="left:650px;width:68px;text-align:center;top:402.8px">53</div>
<div class="c lnk" style="left:721px;top:402.8px;letter-spacing:.08px;height:12px">resumelink.com</div>
<div class="c lnk" style="left:790.500px;top:402.8px;letter-spacing:.27px;height:12px">portfoliolink.com</div>
<div class="chip" style="left:34px;width:87.500px;top:414.8px;background:#f9d2ce;color:#b3241c"><span>Job Title 1</span><b></b></div>
<div class="c" style="left:130px;top:416.4px;letter-spacing:.14px">Applicant 10</div>
<div class="c" style="left:213px;top:416.4px;letter-spacing:.33px">xxx-xxx-xxxx</div>
<div class="c" style="left:293px;width:79px;top:416.4px;letter-spacing:.2px;height:11px">sampleemail@gmail.com</div>
<div class="c" style="left:373px;width:67px;text-align:right;top:416.4px;letter-spacing:.15px">10/11/2024</div>
<div class="chip" style="left:448.500px;width:64px;top:414.8px;background:#c0ddf5;color:#1d57b0"><span>Hired</span><b></b></div>
<div class="cb on" style="left:546.3px;top:414.1px"><svg class="ico" style="left:1.500px;top:2px" width="7" height="6" viewBox="0 0 7 6" fill="none" stroke="#fff" stroke-width="1.300"><path d="M.6 3.100l2 2L6.500 .9"/></svg></div>
<div class="cb off" style="left:611.8px;top:414.1px"></div>
<div style="position:absolute;left:650px;top:413px;width:68px;height:13px;background:#314e1e"></div>
<div class="c" style="left:650px;width:68px;text-align:center;top:416.4px;color:#fff;text-decoration:line-through;font-weight:700;font-size:8.500px">53</div>
<div class="c lnk" style="left:721px;top:416.4px;letter-spacing:.08px;height:12px">resumelink.com</div>
<div class="c lnk" style="left:790.500px;top:416.4px;letter-spacing:.27px;height:12px">portfoliolink.com</div>
<div class="chip" style="left:34px;width:87.500px;top:428.4px;background:#f9d2ce;color:#b3241c"><span>Job Title 1</span><b></b></div>
<div class="c" style="left:130px;top:430.0px;letter-spacing:.14px">Applicant 11</div>
<div class="c" style="left:213px;top:430.0px;letter-spacing:.33px">xxx-xxx-xxxx</div>
<div class="c" style="left:293px;width:79px;top:430.0px;letter-spacing:.2px;height:11px">sampleemail@gmail.com</div>
<div class="c" style="left:373px;width:67px;text-align:right;top:430.0px;letter-spacing:.15px">10/11/2024</div>
<div class="chip" style="left:448.500px;width:64px;top:428.4px;background:#d3eabd;color:#25754f"><span>Interview…</span><b></b></div>
<div class="cb on" style="left:546.3px;top:427.7px"><svg class="ico" style="left:1.500px;top:2px" width="7" height="6" viewBox="0 0 7 6" fill="none" stroke="#fff" stroke-width="1.300"><path d="M.6 3.100l2 2L6.500 .9"/></svg></div>
<div class="cb on" style="left:611.8px;top:427.7px"><svg class="ico" style="left:1.500px;top:2px" width="7" height="6" viewBox="0 0 7 6" fill="none" stroke="#fff" stroke-width="1.300"><path d="M.6 3.100l2 2L6.500 .9"/></svg></div>
<div class="c" style="left:650px;width:68px;text-align:center;top:430.0px">53</div>
<div class="c lnk" style="left:721px;top:430.0px;letter-spacing:.08px;height:12px">resumelink.com</div>
<div class="c lnk" style="left:790.500px;top:430.0px;letter-spacing:.27px;height:12px">portfoliolink.com</div>
<div class="chip" style="left:34px;width:87.500px;top:442.0px;background:#c0ddf5;color:#1d57b0"><span>Job Title 5</span><b></b></div>
<div class="c" style="left:130px;top:443.6px;letter-spacing:.14px">Applicant 12</div>
<div class="c" style="left:213px;top:443.6px;letter-spacing:.33px">xxx-xxx-xxxx</div>
<div class="c" style="left:293px;width:79px;top:443.6px;letter-spacing:.2px;height:11px">sampleemail@gmail.com</div>
<div class="c" style="left:373px;width:67px;text-align:right;top:443.6px;letter-spacing:.15px">10/15/2024</div>
<div class="chip" style="left:448.500px;width:64px;top:442.0px;background:#d3eabd;color:#25754f"><span>Interview…</span><b></b></div>
<div class="cb on" style="left:546.3px;top:441.3px"><svg class="ico" style="left:1.500px;top:2px" width="7" height="6" viewBox="0 0 7 6" fill="none" stroke="#fff" stroke-width="1.300"><path d="M.6 3.100l2 2L6.500 .9"/></svg></div>
<div class="cb off" style="left:611.8px;top:441.3px"></div>
<div class="c" style="left:650px;width:68px;text-align:center;top:443.6px">49</div>
<div class="c lnk" style="left:721px;top:443.6px;letter-spacing:.08px;height:12px">resumelink.com</div>
<div class="c lnk" style="left:790.500px;top:443.6px;letter-spacing:.27px;height:12px">portfoliolink.com</div>
<div class="chip" style="left:34px;width:87.500px;top:455.6px;background:#f7c8aa;color:#7a4a1e"><span>Job Title 2</span><b></b></div>
<div class="c" style="left:130px;top:457.2px;letter-spacing:.14px">Applicant 13</div>
<div class="c" style="left:213px;top:457.2px;letter-spacing:.33px">xxx-xxx-xxxx</div>
<div class="c" style="left:293px;width:79px;top:457.2px;letter-spacing:.2px;height:11px">sampleemail@gmail.com</div>
<div class="c" style="left:373px;width:67px;text-align:right;top:457.2px;letter-spacing:.15px">10/15/2024</div>
<div class="chip" style="left:448.500px;width:64px;top:455.6px;background:#fbe3a3;color:#4f4326"><span>Applied</span><b></b></div>
<div class="cb on" style="left:546.3px;top:454.9px"><svg class="ico" style="left:1.500px;top:2px" width="7" height="6" viewBox="0 0 7 6" fill="none" stroke="#fff" stroke-width="1.300"><path d="M.6 3.100l2 2L6.500 .9"/></svg></div>
<div class="cb off" style="left:611.8px;top:454.9px"></div>
<div class="c" style="left:650px;width:68px;text-align:center;top:457.2px">49</div>
<div class="c lnk" style="left:721px;top:457.2px;letter-spacing:.08px;height:12px">resumelink.com</div>
<div class="c lnk" style="left:790.500px;top:457.2px;letter-spacing:.27px;height:12px">portfoliolink.com</div>
<div class="chip" style="left:34px;width:87.500px;top:469.2px;background:#fbe3a3;color:#4f4326"><span>Job Title 3</span><b></b></div>
<div class="c" style="left:130px;top:470.8px;letter-spacing:.14px">Applicant 14</div>
<div class="c" style="left:213px;top:470.8px;letter-spacing:.33px">xxx-xxx-xxxx</div>
<div class="c" style="left:293px;width:79px;top:470.8px;letter-spacing:.2px;height:11px">sampleemail@gmail.com</div>
<div class="c" style="left:373px;width:67px;text-align:right;top:470.8px;letter-spacing:.15px">10/21/2024</div>
<div class="chip" style="left:448.500px;width:64px;top:469.2px;background:#fbe3a3;color:#4f4326"><span>Applied</span><b></b></div>
<div class="cb on" style="left:546.3px;top:468.5px"><svg class="ico" style="left:1.500px;top:2px" width="7" height="6" viewBox="0 0 7 6" fill="none" stroke="#fff" stroke-width="1.300"><path d="M.6 3.100l2 2L6.500 .9"/></svg></div>
<div class="cb off" style="left:611.8px;top:468.5px"></div>
<div class="c" style="left:650px;width:68px;text-align:center;top:470.8px">43</div>
<div class="c lnk" style="left:721px;top:470.8px;letter-spacing:.08px;height:12px">resumelink.com</div>
<div class="c lnk" style="left:790.500px;top:470.8px;letter-spacing:.27px;height:12px">portfoliolink.com</div>
<div class="chip" style="left:34px;width:87.500px;top:482.8px;background:#f9d2ce;color:#b3241c"><span>Job Title 1</span><b></b></div>
<div class="c" style="left:130px;top:484.4px;letter-spacing:.14px">Applicant 15</div>
<div class="c" style="left:213px;top:484.4px;letter-spacing:.33px">xxx-xxx-xxxx</div>
<div class="c" style="left:293px;width:79px;top:484.4px;letter-spacing:.2px;height:11px">sampleemail@gmail.com</div>
<div class="c" style="left:373px;width:67px;text-align:right;top:484.4px;letter-spacing:.15px">10/21/2024</div>
<div class="chip" style="left:448.500px;width:64px;top:482.8px;background:#d3eabd;color:#25754f"><span>Interview…</span><b></b></div>
<div class="cb on" style="left:546.3px;top:482.1px"><svg class="ico" style="left:1.500px;top:2px" width="7" height="6" viewBox="0 0 7 6" fill="none" stroke="#fff" stroke-width="1.300"><path d="M.6 3.100l2 2L6.500 .9"/></svg></div>
<div class="cb off" style="left:611.8px;top:482.1px"></div>
<div class="c" style="left:650px;width:68px;text-align:center;top:484.4px">43</div>
<div class="c lnk" style="left:721px;top:484.4px;letter-spacing:.08px;height:12px">resumelink.com</div>
<div class="c lnk" style="left:790.500px;top:484.4px;letter-spacing:.27px;height:12px">portfoliolink.com</div>
<div class="chip" style="left:34px;width:87.500px;top:496.4px;background:#d3eabd;color:#25754f"><span>Job Title 4</span><b></b></div>
<div class="c" style="left:130px;top:498.0px;letter-spacing:.14px">Applicant 16</div>
<div class="c" style="left:213px;top:498.0px;letter-spacing:.33px">xxx-xxx-xxxx</div>
<div class="c" style="left:293px;width:79px;top:498.0px;letter-spacing:.2px;height:11px">sampleemail@gmail.com</div>
<div class="c" style="left:373px;width:67px;text-align:right;top:498.0px;letter-spacing:.15px">10/23/2024</div>
<div class="chip" style="left:448.500px;width:64px;top:496.4px;background:#d3eabd;color:#25754f"><span>Interview…</span><b></b></div>
<div class="cb on" style="left:546.3px;top:495.7px"><svg class="ico" style="left:1.500px;top:2px" width="7" height="6" viewBox="0 0 7 6" fill="none" stroke="#fff" stroke-width="1.300"><path d="M.6 3.100l2 2L6.500 .9"/></svg></div>
<div class="cb off" style="left:611.8px;top:495.7px"></div>
<div class="c" style="left:650px;width:68px;text-align:center;top:498.0px">41</div>
<div class="c lnk" style="left:721px;top:498.0px;letter-spacing:.08px;height:12px">resumelink.com</div>
<div class="c lnk" style="left:790.500px;top:498.0px;letter-spacing:.27px;height:12px">portfoliolink.com</div>
<div class="chip" style="left:34px;width:87.500px;top:510.0px;background:#c0ddf5;color:#1d57b0"><span>Job Title 5</span><b></b></div>
<div class="c" style="left:130px;top:511.6px;letter-spacing:.14px">Applicant 17</div>
<div class="c" style="left:213px;top:511.6px;letter-spacing:.33px">xxx-xxx-xxxx</div>
<div class="c" style="left:293px;width:79px;top:511.6px;letter-spacing:.2px;height:11px">sampleemail@gmail.com</div>
<div class="c" style="left:373px;width:67px;text-align:right;top:511.6px;letter-spacing:.15px">10/23/2024</div>
<div class="chip" style="left:448.500px;width:64px;top:510.0px;background:#c0ddf5;color:#1d57b0"><span>Hired</span><b></b></div>
<div class="cb on" style="left:546.3px;top:509.3px"><svg class="ico" style="left:1.500px;top:2px" width="7" height="6" viewBox="0 0 7 6" fill="none" stroke="#fff" stroke-width="1.300"><path d="M.6 3.100l2 2L6.500 .9"/></svg></div>
<div class="cb on" style="left:611.8px;top:509.3px"><svg class="ico" style="left:1.500px;top:2px" width="7" height="6" viewBox="0 0 7 6" fill="none" stroke="#fff" stroke-width="1.300"><path d="M.6 3.100l2 2L6.500 .9"/></svg></div>
<div style="position:absolute;left:650px;top:509px;width:68px;height:12px;background:#314e1e"></div>
<div class="c" style="left:650px;width:68px;text-align:center;top:511.6px;color:#fff;text-decoration:line-through;font-weight:700;font-size:8.500px">41</div>
<div class="c lnk" style="left:721px;top:511.6px;letter-spacing:.08px;height:12px">resumelink.com</div>
<div class="c lnk" style="left:790.500px;top:511.6px;letter-spacing:.27px;height:12px">portfoliolink.com</div>
<div class="chip" style="left:34px;width:87.500px;top:523.6px;background:#f7c8aa;color:#7a4a1e"><span>Job Title 2</span><b></b></div>
<div class="c" style="left:130px;top:525.2px;letter-spacing:.14px">Applicant 18</div>
<div class="c" style="left:213px;top:525.2px;letter-spacing:.33px">xxx-xxx-xxxx</div>
<div class="c" style="left:293px;width:79px;top:525.2px;letter-spacing:.2px;height:11px">sampleemail@gmail.com</div>
<div class="c" style="left:373px;width:67px;text-align:right;top:525.2px;letter-spacing:.15px">10/24/2024</div>
<div class="chip" style="left:448.500px;width:64px;top:523.6px;background:#c0ddf5;color:#1d57b0"><span>Hired</span><b></b></div>
<div class="cb on" style="left:546.3px;top:522.9px"><svg class="ico" style="left:1.500px;top:2px" width="7" height="6" viewBox="0 0 7 6" fill="none" stroke="#fff" stroke-width="1.300"><path d="M.6 3.100l2 2L6.500 .9"/></svg></div>
<div class="cb on" style="left:611.8px;top:522.9px"><svg class="ico" style="left:1.500px;top:2px" width="7" height="6" viewBox="0 0 7 6" fill="none" stroke="#fff" stroke-width="1.300"><path d="M.6 3.100l2 2L6.500 .9"/></svg></div>
<div style="position:absolute;left:650px;top:522px;width:68px;height:13px;background:#314e1e"></div>
<div class="c" style="left:650px;width:68px;text-align:center;top:525.2px;color:#fff;text-decoration:line-through;font-weight:700;font-size:8.500px">40</div>
<div class="c lnk" style="left:721px;top:525.2px;letter-spacing:.08px;height:12px">resumelink.com</div>
<div class="c lnk" style="left:790.500px;top:525.2px;letter-spacing:.27px;height:12px">portfoliolink.com</div>
<div class="chip" style="left:34px;width:87.500px;top:537.2px;background:#fbe3a3;color:#4f4326"><span>Job Title 3</span><b></b></div>
<div class="c" style="left:130px;top:538.8px;letter-spacing:.14px">Applicant 19</div>
<div class="c" style="left:213px;top:538.8px;letter-spacing:.33px">xxx-xxx-xxxx</div>
<div class="c" style="left:293px;width:79px;top:538.8px;letter-spacing:.2px;height:11px">sampleemail@gmail.com</div>
<div class="c" style="left:373px;width:67px;text-align:right;top:538.8px;letter-spacing:.15px">10/24/2024</div>
<div class="chip" style="left:448.500px;width:64px;top:537.2px;background:#fbe3a3;color:#4f4326"><span>Applied</span><b></b></div>
<div class="cb on" style="left:546.3px;top:536.5px"><svg class="ico" style="left:1.500px;top:2px" width="7" height="6" viewBox="0 0 7 6" fill="none" stroke="#fff" stroke-width="1.300"><path d="M.6 3.100l2 2L6.500 .9"/></svg></div>
<div class="cb off" style="left:611.8px;top:536.5px"></div>
<div class="c" style="left:650px;width:68px;text-align:center;top:538.8px">40</div>
<div class="c lnk" style="left:721px;top:538.8px;letter-spacing:.08px;height:12px">resumelink.com</div>
<div class="c lnk" style="left:790.500px;top:538.8px;letter-spacing:.27px;height:12px">portfoliolink.com</div>
</div></body></html>
